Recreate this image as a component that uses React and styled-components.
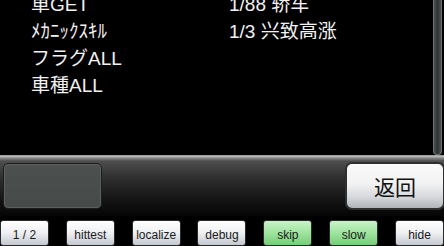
import React from "react";
import styled, { createGlobalStyle } from "styled-components";

const GlobalStyle = createGlobalStyle`
  html, body {
    margin: 0;
    padding: 0;
    background: #000;
    overflow: hidden;
  }
`;

const Screen = styled.div`
  width: 444px;
  height: 246px;
  background: #000;
  overflow: hidden;
  display: flex;
  flex-direction: column;
  font-family: "Liberation Sans", "Noto Sans CJK JP", sans-serif;
`;

const Main = styled.div`
  height: 157px;
  display: flex;
  overflow: hidden;
`;

const List = styled.div`
  flex: 1;
  display: grid;
  grid-template-columns: 198px 1fr;
  grid-auto-rows: 27px;
  align-content: start;
  padding-left: 31px;
  margin-top: -9px;
  color: #f2f2f2;
  font-size: 19px;
  line-height: 27px;
`;

const Cell = styled.div`
  white-space: nowrap;
  font-family: ${(p) =>
    p.$zh
      ? `"Liberation Sans", "Noto Sans CJK SC", sans-serif`
      : `"Liberation Sans", "Noto Sans CJK JP", sans-serif`};
`;

const ScrollTrack = styled.div`
  width: 7px;
  height: 154px;
  margin-right: 2px;
  border: 1px solid #6c7272;
  border-top: none;
  border-radius: 0 0 4px 4px;
  background: linear-gradient(to right, #4a5050, #2e3434 50%, #4a5050);
`;

const Bar = styled.div`
  height: 62px;
  display: flex;
  align-items: center;
  justify-content: space-between;
  padding: 2px 0 0 3px;
  box-sizing: border-box;
  background: linear-gradient(
    to bottom,
    #7a7a7a 0px,
    #c4c4c4 1px,
    #8a8a8a 3px,
    #4e4e4e 6px,
    #303030 22px,
    #141414 45px,
    #050505 100%
  );
`;

const Slot = styled.div`
  width: 97px;
  height: 44px;
  border-radius: 5px;
  border: 1px solid #1c1c1c;
  box-shadow: inset 0 0 0 1px #5c605e;
  background: linear-gradient(to bottom, #4c504e, #464a48);
`;

const BackButton = styled.button`
  width: 100px;
  height: 48px;
  margin-right: -1px;
  border: 2px solid #2e3030;
  border-radius: 7px;
  background: linear-gradient(
    to bottom,
    #fafafa 0%,
    #f2f2f2 45%,
    #d6d8dc 75%,
    #b0b4ba 100%
  );
  color: #111;
  font-family: "Noto Sans CJK JP", sans-serif;
  font-size: 21px;
  padding: 0;
`;

const DebugRow = styled.div`
  display: flex;
  justify-content: space-between;
  padding-top: 4px;
`;

const DebugButton = styled.div`
  width: 49px;
  height: 26px;
  box-sizing: border-box;
  border-radius: 3px;
  border: 1px solid #2a2a2a;
  padding-top: 7px;
  text-align: center;
  font-size: 12px;
  color: #1a1a1a;
  background: ${(p) =>
    p.$on
      ? "linear-gradient(to bottom, #c8f4c8, #9ee49e 50%, #78cc78)"
      : "linear-gradient(to bottom, #ffffff, #eef0f2 50%, #c4c8d0)"};
`;

const leftItems = ["車GET", "ﾒｶﾆｯｸｽｷﾙ", "フラグALL", "車種ALL"];
const rightItems = ["1/88 轿车", "1/3 兴致高涨", "", ""];

const debugButtons = [
  { label: "1 / 2" },
  { label: "hittest" },
  { label: "localize" },
  { label: "debug" },
  { label: "skip", on: true },
  { label: "slow", on: true },
  { label: "hide" },
];

export default function App() {
  return (
    <>
      <GlobalStyle />
      <Screen>
        <Main>
          <List>
            {leftItems.map((item, i) => (
              <React.Fragment key={i}>
                <Cell>{item}</Cell>
                <Cell $zh>{rightItems[i]}</Cell>
              </React.Fragment>
            ))}
          </List>
          <ScrollTrack />
        </Main>
        <Bar>
          <Slot />
          <BackButton>返回</BackButton>
        </Bar>
        <DebugRow>
          {debugButtons.map((b) => (
            <DebugButton key={b.label} $on={b.on}>
              {b.label}
            </DebugButton>
          ))}
        </DebugRow>
      </Screen>
    </>
  );
}
